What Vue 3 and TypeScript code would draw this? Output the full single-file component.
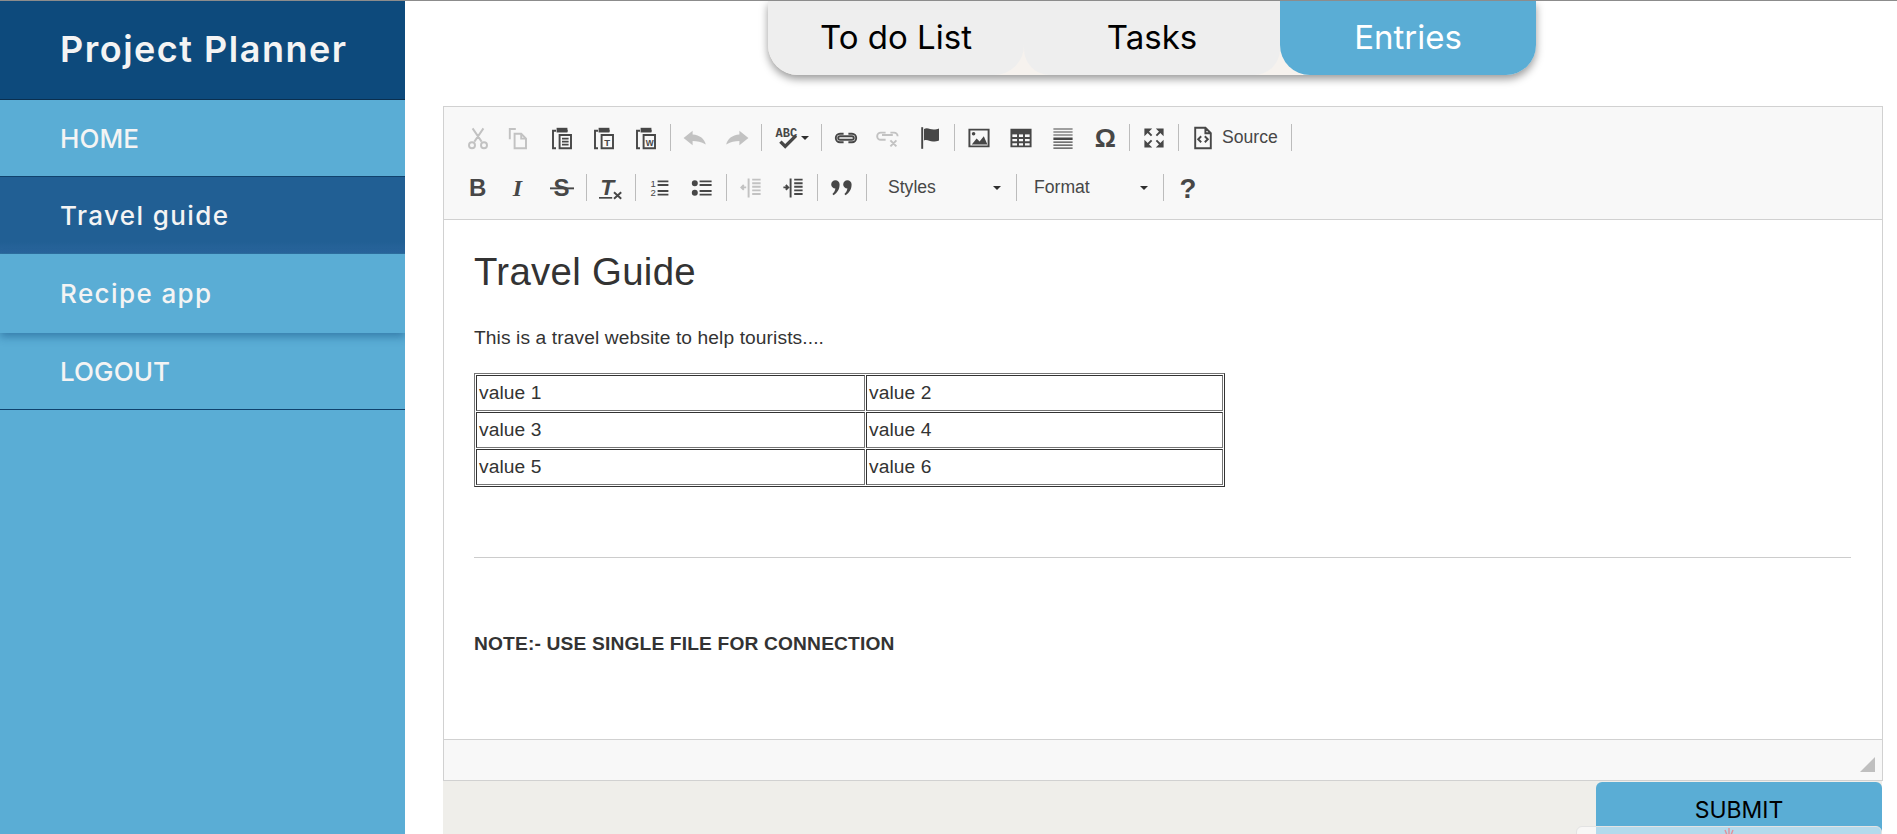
<template>
  <div class="page">
    <aside class="sidebar">
      <div class="brand">Project Planner</div>
      <nav class="nav">
        <a
          v-for="item in navItems"
          :key="item.label"
          class="nav-item"
          :class="{ active: item.active, raised: item.raised, caps: item.caps }"
        >{{ item.label }}</a>
      </nav>
    </aside>

    <main class="main">
      <div class="tabs">
        <button
          v-for="tab in tabs"
          :key="tab"
          class="tab"
          :class="{ selected: tab === activeTab }"
          @click="activeTab = tab"
        >{{ tab }}</button>
      </div>

      <section class="editor">
        <div class="toolbar">
          <div v-for="(row, r) in toolbar" :key="r" class="tool-row">
            <template v-for="(group, g) in row" :key="g">
              <div class="tool-group">
                <template v-for="tool in group" :key="tool.name">
                  <div
                    v-if="tool.combo"
                    class="combo"
                    :class="{ tight: tool.name === 'Format' }"
                    :style="{ width: tool.combo + 'px' }"
                  >
                    <span>{{ tool.name }}</span>
                    <i class="caret"></i>
                  </div>
                  <div v-else class="tool" :class="{ wide: tool.caret, labelled: tool.label }">
                    <svg
                      class="icon"
                      :class="{ off: tool.off }"
                      viewBox="0 0 20 20"
                      width="24"
                      height="24"
                    >
                      <path v-if="tool.s" :d="tool.s" fill="none" stroke="#474747" stroke-width="1.6" />
                      <path v-if="tool.f" :d="tool.f" fill="#474747" />
                      <text
                        v-for="t in tool.t"
                        :key="t.text"
                        :x="t.x"
                        :y="t.y"
                        :font-size="t.size"
                        :font-weight="t.weight || 'bold'"
                        :font-style="t.italic ? 'italic' : 'normal'"
                        :font-family="t.family || 'Liberation Sans, sans-serif'"
                        fill="#474747"
                      >{{ t.text }}</text>
                    </svg>
                    <i v-if="tool.caret" class="caret small"></i>
                    <span v-if="tool.label" class="tool-label">{{ tool.label }}</span>
                  </div>
                </template>
              </div>
              <span v-if="g < row.length - 1 || r === 0" class="sep"></span>
            </template>
          </div>
        </div>

        <div class="content">
          <h1>Travel Guide</h1>
          <p>This is a travel website to help tourists....</p>
          <table class="values">
            <tbody>
              <tr v-for="(row, i) in tableRows" :key="i">
                <td v-for="cell in row" :key="cell">{{ cell }}</td>
              </tr>
            </tbody>
          </table>
          <hr />
          <p class="note">NOTE:- USE SINGLE FILE FOR CONNECTION</p>
        </div>

        <div class="statusbar"><i class="grip"></i></div>
      </section>

      <div class="actions">
        <button class="submit">SUBMIT</button>
        <div class="widget">
          <svg width="20" height="10" viewBox="0 0 20 10">
            <path d="M10 1v8M6 3l2 5M14 3l-2 5" stroke="#e0909a" stroke-width="1.4" fill="none" />
          </svg>
        </div>
      </div>
    </main>
  </div>
</template>

<script setup lang="ts">
import { ref } from 'vue'

interface IconText {
  x: number
  y: number
  size: number
  text: string
  weight?: string
  italic?: boolean
  family?: string
}

interface Tool {
  name: string
  s?: string
  f?: string
  t?: IconText[]
  off?: boolean
  caret?: boolean
  label?: string
  combo?: number
}

const navItems = [
  { label: 'HOME', caps: true },
  { label: 'Travel guide', active: true },
  { label: 'Recipe app', raised: true },
  { label: 'LOGOUT', caps: true }
]

const tabs = ['To do List', 'Tasks', 'Entries']
const activeTab = ref('Entries')

const tableRows = [
  ['value 1', 'value 2'],
  ['value 3', 'value 4'],
  ['value 5', 'value 6']
]

const clipboard = 'M5 4H2.500v14.500H5'
const clipTop = 'M5.500 1.500h9v3.900h-9z'

const toolbar: Tool[][][] = [
  [
    [
      { name: 'cut', off: true, s: 'M5.500 2l7.500 11M14.500 2L7 13M2.500 16a2.500 2.500 0 1 0 5 0a2.500 2.500 0 1 0-5 0M12.500 16a2.500 2.500 0 1 0 5 0a2.500 2.500 0 1 0-5 0' },
      { name: 'copy', off: true, s: 'M1.500 11V2.500h5M5.500 6.500h5.500l4 4v8H5.500zM11 6.500v4h4' },
      { name: 'paste', s: clipboard + 'M15 4H14.500M8 7.500h9.500v11H8zM10 10.500h5.500M10 13h5.500M10 15.500h5.500', f: clipTop },
      { name: 'paste-text', s: clipboard + 'M15 4H14.500M8 7.500h9.500v11H8z', f: clipTop, t: [{ x: 10.200, y: 16.500, size: 8, text: 'T' }] },
      { name: 'paste-word', s: clipboard + 'M15 4H14.500M8 7.500h9.500v11H8z', f: clipTop, t: [{ x: 9.700, y: 16.500, size: 7, text: 'W' }] }
    ],
    [
      { name: 'undo', off: true, f: 'M8 4L.5 10 8 16v-3.500c4 0 7 .5 11 3-1-5-5-8-11-8.500z' },
      { name: 'redo', off: true, f: 'M12 4l7.500 6-7.500 6v-3.500c-4 0-7 .5-11 3 1-5 5-8 11-8.500z' }
    ],
    [
      { name: 'spell', caret: true, f: 'M3.500 14l2-2 3 3 8-8 2 2-10 10z', t: [{ x: 0.500, y: 9.500, size: 10, text: 'ABC', family: 'Liberation Mono, monospace' }] }
    ],
    [
      { name: 'link', s: 'M8 6.500H5a3.500 3.500 0 0 0 0 7h3M12 6.500h3a3.500 3.500 0 0 1 0 7h-3M5 8.500h10a1.500 1.500 0 0 1 0 3H5a1.500 1.500 0 0 1 0-3z' },
      { name: 'unlink', off: true, s: 'M8 5.500H4a3 3 0 0 0 0 6h4M12 5.500h3a3 3 0 0 1 3 3M5 7.500h9M12 12l5 5M17 12l-5 5' },
      { name: 'anchor', s: 'M3.500 1v18', f: 'M5 2.500c3-1.500 5 .5 8 .5 2 0 3-.5 4.500-1v10c-1.500.5-3 1-5 1-3 0-4.500-2-7.500-1z' }
    ],
    [
      { name: 'image', s: 'M2 3h16v14H2z', f: 'M4 15.500l4-5 2.500 2.500 3.500-4.500 3 7zM4 6.500a1.500 1.500 0 1 0 3 0a1.500 1.500 0 1 0-3 0z' },
      { name: 'table', s: 'M2 3h16v14H2zM2 10h16M2 13.500h16M7.500 6v11M12.500 6v11', f: 'M2 3h16v4H2z' },
      { name: 'hr', f: 'M2 2h16v1H2zM2 4.500h16v1H2zM2 7h16v1H2zM2 9.500h16v2.200H2zM2 13h16v1H2zM2 15.500h16v1H2zM2 18h16v1H2z' },
      { name: 'omega', t: [{ x: 1.500, y: 17.500, size: 22, text: 'Ω' }] }
    ],
    [
      { name: 'maximize', s: 'M4 4l4 4M16 4l-4 4M4 16l4-4M16 16l-4-4', f: 'M2 2h6.500L2 8.500zM18 2h-6.500L18 8.500zM2 18h6.500L2 11.500zM18 18h-6.500L18 11.500z' }
    ],
    [
      { name: 'source', label: 'Source', s: 'M3.500 1.500h8.500l4.500 4.500v12.500h-13zM12 1.500v4.500h4.500M8.500 8.500L6 11l2.500 2.500M11.500 8.500L14 11l-2.500 2.500' }
    ]
  ],
  [
    [
      { name: 'bold', t: [{ x: 2.500, y: 17, size: 20, text: 'B' }] },
      { name: 'italic', t: [{ x: 4, y: 17, size: 20, text: 'I', italic: true, family: 'Liberation Serif, serif' }] },
      { name: 'strike', f: 'M0 9.500h20v1.600H0z', t: [{ x: 3, y: 17, size: 20, text: 'S' }] }
    ],
    [
      { name: 'remove-format', f: 'M0 17.500h11v1.400H0z', s: 'M12.500 13.500l6 5.500M18.500 13.500l-6 5.500', t: [{ x: 1, y: 15.500, size: 19, text: 'T', italic: true }] }
    ],
    [
      {
        name: 'numbered',
        s: 'M8 4.500h9M8 7.500h9M8 12.500h9M8 15.500h9',
        t: [
          { x: 2, y: 9, size: 8, text: '1', weight: 'normal' },
          { x: 2, y: 17, size: 8, text: '2', weight: 'normal' }
        ]
      },
      { name: 'bulleted', s: 'M8 4.500h10M8 7.500h10M8 12.500h10M8 15.500h10', f: 'M1.500 6a2.500 2.500 0 1 0 5 0a2.500 2.500 0 1 0-5 0zM1.500 14a2.500 2.500 0 1 0 5 0a2.500 2.500 0 1 0-5 0z' }
    ],
    [
      { name: 'outdent', off: true, s: 'M11 3h7M11 6h7M11 9h7M11 12h7M11 15h7M8 2v16M2 9.500h4M4 7.500l-2 2 2 2' },
      { name: 'indent', s: 'M11 3h7M11 6h7M11 9h7M11 12h7M11 15h7M8 2v16M2 9.500h4M4 7.500l2 2-2 2' }
    ],
    [
      { name: 'quote', f: 'M1 7a3.500 3.500 0 1 1 7 0c0 4-2 7-5 9l-1-1c1.500-1.500 2.200-2.500 2.500-4.500A3.500 3.500 0 0 1 1 7zM11 7a3.500 3.500 0 1 1 7 0c0 4-2 7-5 9l-1-1c1.500-1.500 2.200-2.500 2.500-4.500A3.500 3.500 0 0 1 11 7z' }
    ],
    [{ name: 'Styles', combo: 143 }],
    [{ name: 'Format', combo: 140 }],
    [
      { name: 'help', t: [{ x: 3, y: 18, size: 23, text: '?' }] }
    ]
  ]
]
</script>

<style>
html,
body {
  margin: 0;
  overflow: hidden;
}
</style>

<style scoped>
.page {
  display: flex;
  height: 833px;
  overflow: hidden;
  border-top: 1px solid #8c8c8c;
  background: #fff;
  font-family: 'Liberation Sans', Arial, sans-serif;
}

.sidebar {
  flex: 0 0 405px;
  overflow: hidden;
  background: #5aadd5;
  color: #f4f4f4;
  font-family: Inter, 'Open Sans', sans-serif;
}

.brand {
  display: flex;
  align-items: center;
  height: 95px;
  padding: 0 0 3px 60px;
  background: #0d4a7c;
  border-bottom: 1px solid #0a2f4f;
  font-size: 36px;
  font-weight: 600;
  letter-spacing: 1.500px;
}

.nav {
  display: flex;
  flex-direction: column;
}

.nav-item {
  display: flex;
  align-items: center;
  height: 76px;
  padding-left: 60px;
  border-bottom: 1px solid #10426d;
  font-size: 26px;
  font-weight: 500;
  letter-spacing: 1.400px;
}

.nav-item.caps {
  letter-spacing: 0.100px;
}

.nav-item.active {
  background: linear-gradient(#215f94 85%, #29659c);
  border-bottom-color: #2f6f9f;
}

.nav-item.raised {
  position: relative;
  height: 79px;
  border-bottom: none;
  box-shadow: 0 4px 8px rgba(13, 74, 124, 0.45);
}

.main {
  flex: 1;
  display: flex;
  flex-direction: column;
  min-width: 0;
  padding: 0 14px 0 38px;
}

.tabs {
  align-self: center;
  display: flex;
  flex: 0 0 74px;
  width: 768px;
  margin-left: -22px;
  background: #f6f2ee;
  border-radius: 0 0 30px 30px;
  box-shadow: 0 4px 8px rgba(0, 0, 0, 0.4);
  font-family: Inter, 'Open Sans', sans-serif;
}

.tab {
  flex: 1;
  border: none;
  border-radius: 0 0 26px 26px;
  background: #eeeeee;
  color: #000;
  font: inherit;
  font-size: 33px;
  padding: 0 0 2px;
}

.tab:first-child,
.tab.selected {
  border-radius: 0 0 30px 30px;
}

.tab.selected {
  background: #5aadd5;
  color: #fff;
}

.editor {
  flex: 0 0 auto;
  margin-top: 31px;
  border: 1px solid #d1d1d1;
  background: #fff;
}

.toolbar {
  display: flex;
  flex-direction: column;
  gap: 23px;
  padding: 17px 0 18px 13px;
  background: #f8f8f8;
  border-bottom: 1px solid #d1d1d1;
}

.tool-row {
  display: flex;
  align-items: center;
  height: 27px;
}

.tool-group {
  display: flex;
}

.tool {
  display: flex;
  align-items: center;
  justify-content: center;
  width: 42px;
  height: 27px;
}

.tool.wide {
  width: 53px;
  gap: 2px;
}

.tool.labelled {
  width: 106px;
  justify-content: flex-start;
  padding-left: 9px;
  box-sizing: border-box;
  gap: 7px;
}

.tool-label {
  font-size: 17.600px;
  color: #474747;
}

.icon {
  flex: none;
  overflow: visible;
}

.icon.off {
  opacity: 0.3;
}

.sep {
  width: 1px;
  height: 27px;
  margin: 0 3px;
  background: #bcbcbc;
}

.combo {
  display: flex;
  align-items: center;
  justify-content: space-between;
  box-sizing: border-box;
  height: 27px;
  padding: 0 12px 0 18px;
  font-size: 17.600px;
  color: #474747;
}

.combo.tight {
  padding-left: 14px;
}

.caret {
  display: block;
  width: 0;
  height: 0;
  border-top: 4px solid #2f2f2f;
  border-left: 4px solid transparent;
  border-right: 4px solid transparent;
}

.content {
  box-sizing: border-box;
  height: 519px;
  padding: 29px 31px 0 30px;
  color: #333;
  font-size: 19.200px;
}

h1 {
  margin: 0;
  font-size: 38.400px;
  font-weight: 400;
  letter-spacing: 0.300px;
  line-height: 46px;
}

.content p {
  margin: 31px 0 0;
  letter-spacing: 0.100px;
  line-height: 24px;
}

.values {
  width: 751px;
  margin-top: 23px;
  table-layout: fixed;
  border-collapse: separate;
  border-spacing: 1px;
  border: 1px solid;
  border-color: #767676 #333 #333 #767676;
}

.values td {
  box-sizing: border-box;
  height: 36px;
  padding: 1px 2px;
  border: 1px solid;
  border-color: #333 #767676 #767676 #333;
  letter-spacing: 0.100px;
  line-height: 24px;
}

.values td:first-child {
  width: 389px;
}

hr {
  height: 1px;
  margin: 70px 0 0;
  border: none;
  background: #ccc;
}

.content .note {
  margin-top: 74px;
  font-weight: 700;
  letter-spacing: 0.160px;
}

.statusbar {
  display: flex;
  justify-content: flex-end;
  align-items: flex-end;
  height: 41px;
  padding: 0 7px 8px 0;
  box-sizing: border-box;
  background: #f8f8f8;
  border-top: 1px solid #d1d1d1;
}

.grip {
  width: 0;
  height: 0;
  border-bottom: 15px solid #bfbfbf;
  border-left: 15px solid transparent;
}

.actions {
  position: relative;
  flex: 1;
  display: flex;
  justify-content: flex-end;
  align-items: flex-start;
  margin-right: 1px;
  padding-top: 1px;
  background: #efeeea;
}

.submit {
  width: 286px;
  height: 70px;
  padding: 0 0 14px;
  border: none;
  border-radius: 6px;
  background: #5aadd5;
  color: #000;
  font-family: Inter, 'Open Sans', sans-serif;
  font-size: 23px;
}

.widget {
  position: absolute;
  top: 45px;
  right: 0;
  width: 304px;
  height: 30px;
  display: flex;
  justify-content: center;
  border: 1px solid #e3e3e3;
  border-radius: 6px 6px 0 0;
  background: rgba(255, 255, 255, 0.55);
}
</style>
